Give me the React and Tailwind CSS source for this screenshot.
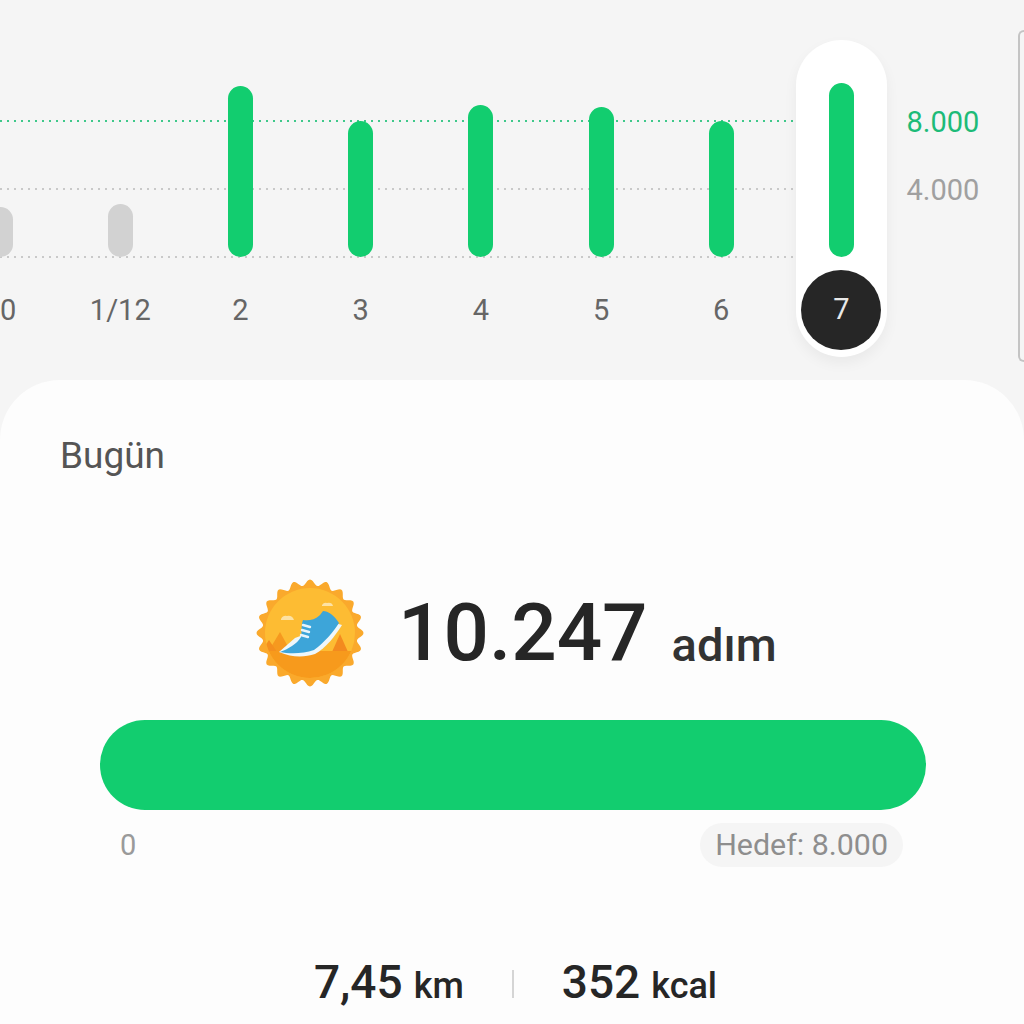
const days = [
  { label: "30", top: 207, grey: true },
  { label: "1/12", top: 204, grey: true },
  { label: "2", top: 86 },
  { label: "3", top: 121 },
  { label: "4", top: 105 },
  { label: "5", top: 107 },
  { label: "6", top: 121 },
  { label: "7", top: 83, active: true },
];

function scallop(cx, cy, R, r, n) {
  let d = "";
  const steps = n * 12;
  for (let i = 0; i <= steps; i++) {
    const a = (i / steps) * Math.PI * 2;
    const rad = (R + r) / 2 + ((R - r) / 2) * Math.cos(n * a);
    const x = cx + rad * Math.sin(a);
    const y = cy - rad * Math.cos(a);
    d += (i ? "L" : "M") + x.toFixed(2) + " " + y.toFixed(2);
  }
  return d + "Z";
}

function Badge() {
  return (
    <svg width="110" height="110" viewBox="0 0 110 110" className="shrink-0">
      <defs>
        <clipPath id="disc">
          <circle cx="55" cy="55" r="45" />
        </clipPath>
      </defs>
      <path d={scallop(55, 55, 53.5, 47.5, 20)} fill="#faa92c" />
      <circle cx="55" cy="55" r="45" fill="#fdbc33" />
      <g clipPath="url(#disc)">
        <path d="M25 54 L13 74 L36 74Z" fill="#f6991f" />
        <path d="M14 62 L6 74 L22 74Z" fill="#f48f1e" />
        <path d="M85 56 L77 74 L93 74Z" fill="#f38a1f" />
        <rect x="0" y="73" width="110" height="37" fill="#f79a1c" />
      </g>
      <path d="M26 41 q2 -4 6 -3 q5 -1 7 4 h-13z" fill="#fde2a4" />
      <path d="M67 27 q2 -3 5 -2 q5 -1 6 3 h-11z" fill="#fde2a4" />
      <path d="M24 74 C38 80 50 79 60 76 C71 70 80 58 87 47 L80 45 L40 60Z" fill="#eef7fb" />
      <path
        d="M25 74 C33 71 42 66 46 59 C47 54 46 47 48 42 C53 43 60 42 65 37 L68 33 C73 33 79 37 84 45 C78 54 70 64 59 72 C48 76 34 76 25 74Z"
        fill="#3da5d9"
      />
      <path d="M48 47 L55 49 M47 52 L54 54 M46 57 L53 59" stroke="#e8f4fa" strokeWidth="2.4" strokeLinecap="round" />
    </svg>
  );
}

export default function App() {
  return (
    <div className="w-[1024px] h-[1024px] overflow-hidden bg-[#f5f5f5] font-['Roboto',sans-serif]">
      <section className="relative h-[380px]">
        <div className="absolute left-0 top-[120px] w-[840px] h-[2px] bg-[repeating-linear-gradient(90deg,#3fc88a_0_2px,transparent_2px_7px)]" />
        <div className="absolute left-0 top-[188px] w-[840px] h-[2px] bg-[repeating-linear-gradient(90deg,#c9c9c9_0_2px,transparent_2px_7px)]" />
        <div className="absolute left-0 top-[256px] w-[840px] h-[2px] bg-[repeating-linear-gradient(90deg,#c9c9c9_0_2px,transparent_2px_7px)]" />

        <div className="relative flex ml-[-60px] pt-[40px]">
          {days.map((d) => (
            <div key={d.label} className="w-[120.2px] shrink-0 flex justify-center">
              <div
                className={
                  d.active
                    ? "w-[91px] h-[317px] rounded-full bg-white shadow-[0_6px_14px_rgba(0,0,0,0.05)] flex flex-col items-center"
                    : "w-[91px] h-[317px] flex flex-col items-center"
                }
              >
                <div className="h-[217px] flex flex-col justify-end">
                  <div
                    className={d.grey ? "w-[25px] rounded-full bg-[#d2d2d2]" : "w-[25px] rounded-full bg-[#12cd6f]"}
                    style={{ height: 257 - d.top }}
                  />
                </div>
                {d.active ? (
                  <div className="mt-[13px] w-[80px] h-[80px] rounded-full bg-[#262626] text-[#e8e8e8] text-[29px] flex items-center justify-center">
                    {d.label}
                  </div>
                ) : (
                  <div className="mt-[14px] h-[80px] flex items-center text-[29px] text-[#666666]">{d.label}</div>
                )}
              </div>
            </div>
          ))}
          <div className="ml-[5px] mt-[65px] flex flex-col gap-[33px] text-[29px] leading-[35px]">
            <span className="text-[#1dbb78]">8.000</span>
            <span className="text-[#a0a0a0]">4.000</span>
          </div>
        </div>
        <div className="absolute right-0 top-[30px] w-[6px] h-[332px] border-2 border-r-0 border-[#c4c4c4] rounded-l-[8px]" />
      </section>

      <section className="h-[644px] bg-[#fdfdfd] rounded-t-[60px] flex flex-col">
        <div className="pl-[60px] pt-[55px] text-[37px] leading-[42px] text-[#555555]">Bugün</div>

        <div className="mt-[101px] pl-[255px] flex items-center h-[110px]">
          <Badge />
          <span className="ml-[33px] text-[80px] leading-none font-medium text-[#262626]">10.247</span>
          <span className="ml-[24px] mt-[22px] text-[47px] leading-none font-medium text-[#333333]">adım</span>
        </div>

        <div className="mt-[32px] mx-[100px] w-[826px] h-[90px] rounded-full bg-[#12cd6f]" />

        <div className="mt-[12px] ml-[120px] w-[783px] flex items-center justify-between">
          <span className="mt-[2px] text-[29px] text-[#9a9a9a]">0</span>
          <span className="h-[44px] px-[15px] rounded-full bg-[#f5f5f5] flex items-center text-[30.4px] text-[#8e8e8e]">
            Hedef: 8.000
          </span>
        </div>

        <div className="mt-[91px] flex items-baseline justify-center pl-[7px] text-[#262626] font-medium">
          <span className="text-[46px] leading-none">7,45</span>
          <span className="ml-[11px] text-[36px] leading-none">km</span>
          <span className="mx-[48px] w-[2px] h-[28px] bg-[#d5d5d5]" />
          <span className="text-[46px] leading-none">352</span>
          <span className="ml-[11px] text-[36px] leading-none">kcal</span>
        </div>
      </section>
    </div>
  );
}
